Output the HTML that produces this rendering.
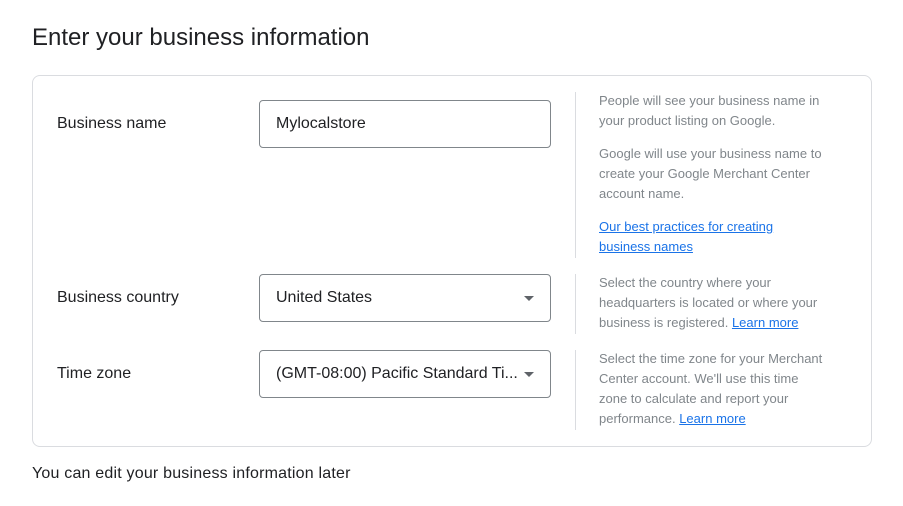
<!DOCTYPE html>
<html><head><style>
*{margin:0;padding:0;box-sizing:border-box}
body{width:903px;height:506px;background:#fff;font-family:"Liberation Sans",sans-serif;color:#202124;position:relative;overflow:hidden}
.a{position:absolute}
h1{position:absolute;left:32px;top:24px;font-size:24px;font-weight:400;color:#202124;white-space:nowrap}
.card{left:32px;top:75px;width:840px;height:372px;border:1px solid #dadce0;border-radius:8px}
.lbl{left:57px;font-size:16px;color:#202124}
.inp{left:259px;width:292px;height:48px;border:1px solid #80868b;border-radius:4px;font-size:16px;padding:14px 0 0 16px;color:#202124;white-space:nowrap}
.arr{position:absolute;right:16px;top:21px;width:0;height:0;border-left:5px solid transparent;border-right:5px solid transparent;border-top:5px solid #5f6368}
.div{left:575px;width:1px;background:#dadce0}
.help{left:599px;width:260px;font-size:13px;line-height:20px;color:#80868b;white-space:nowrap}
.help p{margin-bottom:13px}
a{color:#1a73e8;text-decoration:underline}
</style></head><body>
<h1>Enter your business information</h1>
<div class="a card"></div>
<div class="a lbl" style="top:115px">Business name</div>
<div class="a inp" style="top:100px">Mylocalstore</div>
<div class="a div" style="top:92px;height:166px"></div>
<div class="a help" style="top:91px"><p>People will see your business name in<br>your product listing on Google.</p><p>Google will use your business name to<br>create your Google Merchant Center<br>account name.</p><p><a>Our best practices for creating</a><br><a>business names</a></p></div>

<div class="a lbl" style="top:289px">Business country</div>
<div class="a inp" style="top:274px">United States<span class="arr"></span></div>
<div class="a div" style="top:274px;height:60px"></div>
<div class="a help" style="top:273px">Select the country where your<br>headquarters is located or where your<br>business is registered. <a>Learn more</a></div>

<div class="a lbl" style="top:365px">Time zone</div>
<div class="a inp" style="top:350px">(GMT-08:00) Pacific Standard Ti...<span class="arr"></span></div>
<div class="a div" style="top:350px;height:80px"></div>
<div class="a help" style="top:349px">Select the time zone for your Merchant<br>Center account. We'll use this time<br>zone to calculate and report your<br>performance. <a>Learn more</a></div>

<div class="a" style="left:32px;top:465px;font-size:16px;letter-spacing:0.2px;color:#202124">You can edit your business information later</div>
</body></html>
